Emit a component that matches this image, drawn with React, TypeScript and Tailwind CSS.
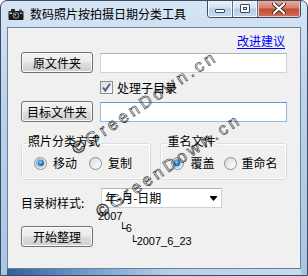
import React from "react";

const btn =
  "h-[21px] w-[72px] shrink-0 rounded-[3px] border border-[#707070] bg-[linear-gradient(#f2f2f2_0%,#ebebeb_48%,#dddddd_52%,#cfcfcf_100%)] shadow-[inset_0_0_0_1px_#fbfbfb] flex items-center justify-center text-[12px] leading-[14px] text-black";

function Radio({ checked }: { checked?: boolean }) {
  return (
    <span className="flex h-[13px] w-[13px] shrink-0 items-center justify-center rounded-full border border-[#8e8f8f] bg-[linear-gradient(135deg,#d8d8d8,#fdfdfd)]">
      {checked ? (
        <span className="flex h-[9px] w-[9px] items-center justify-center rounded-full bg-[linear-gradient(135deg,#6fa3cf,#d5e9f7)]">
          <span className="h-[6px] w-[6px] rounded-full bg-[radial-gradient(circle_at_40%_35%,#9fd3f7_0%,#2a7fc4_45%,#0b3f78_100%)]" />
        </span>
      ) : (
        <span className="h-[9px] w-[9px] rounded-full bg-[linear-gradient(135deg,#dcdcdc,#ffffff)]" />
      )}
    </span>
  );
}

function Watermark({ cls }: { cls: string }) {
  return (
    <span
      className={
        "pointer-events-none absolute origin-left rotate-[-34deg] whitespace-nowrap font-['Liberation_Sans',sans-serif] text-[17px] leading-[24px] tracking-[3.5px] text-transparent [-webkit-text-stroke:0.5px_#000] " +
        cls
      }
    >
      ©GreenDown.cn
    </span>
  );
}

export default function App() {
  return (
    <div className="relative h-[276px] w-[308px] overflow-hidden rounded-t-[7px] border border-[#3c4c60] bg-[linear-gradient(180deg,#d6e5f5_0%,#bcd3ec_35%,#a9c5e5_100%)] px-[6px] font-['Noto_Sans_CJK_SC','Liberation_Sans',sans-serif] text-black">
      {/* title bar */}
      <div className="flex h-[26px] items-start">
        <svg className="ml-[1px] mt-[7px] shrink-0" width="16" height="13" viewBox="0 0 16 13">
          <rect x="0.5" y="3" width="15" height="9" rx="1" fill="#1a1a1a" />
          <rect x="3" y="1" width="4" height="3" fill="#2a2a2a" />
          <rect x="11" y="1.5" width="3" height="2" fill="#555" />
          <circle cx="8" cy="7.5" r="3.3" fill="#8a8a8a" />
          <circle cx="8" cy="7.5" r="2.2" fill="#222" />
          <circle cx="7.3" cy="6.8" r="0.8" fill="#ddd" />
          <rect x="1.5" y="4.5" width="2.5" height="1.5" fill="#cfcfcf" />
          <rect x="12" y="4.5" width="2.5" height="1.5" fill="#9a9a9a" />
        </svg>
        <span className="ml-[6px] mt-[6px] text-[12px] leading-[14px]">数码照片按拍摄日期分类工具</span>
        <div className="flex-1" />
        <div className="-mt-px flex h-[18px] overflow-hidden rounded-b-[4px] border border-t-0 border-[#3c4c60]">
          <div className="flex w-[25px] items-center justify-center border-r border-[#5a6f88] bg-[linear-gradient(180deg,#eef4fb_0%,#d4e2f2_45%,#b5cbe6_55%,#c9dcf0_100%)] shadow-[inset_0_0_0_1px_#f3f8fd]">
            <span className="mt-[5px] h-[4px] w-[10px] rounded-[1px] border border-[#3a4b60] bg-white" />
          </div>
          <div className="flex w-[25px] items-center justify-center border-r border-[#5a6f88] bg-[linear-gradient(180deg,#eef4fb_0%,#d4e2f2_45%,#b5cbe6_55%,#c9dcf0_100%)] shadow-[inset_0_0_0_1px_#f3f8fd]">
            <span className="h-[9px] w-[10px] rounded-[1px] border border-[#3a4b60] bg-white p-[2px]">
              <span className="block h-full w-full border border-[#3a4b60] bg-[#dde7f3]" />
            </span>
          </div>
          <div className="flex w-[42px] items-center justify-center bg-[linear-gradient(180deg,#e8b2a6_0%,#d7806f_45%,#c24b35_55%,#d2725c_100%)] shadow-[inset_0_0_0_1px_#eec3b8]">
            <svg width="14" height="11" viewBox="0 0 14 11">
              <path d="M2 1 L12 10 M12 1 L2 10" stroke="#3a2a28" strokeWidth="4" strokeLinecap="round" />
              <path d="M2 1 L12 10 M12 1 L2 10" stroke="#ffffff" strokeWidth="2.2" strokeLinecap="round" />
            </svg>
          </div>
        </div>
      </div>

      {/* client area */}
      <div className="flex h-[242px] flex-col border border-[#6d8098] bg-[#f0f0f0] px-[13px] text-[12px] leading-[14px]">
        <div className="mt-[6px] flex h-[14px] justify-end">
          <span className="mr-[2px] text-[#0000ff] underline underline-offset-[2px]">改进建议</span>
        </div>

        <div className="mt-[4px] flex items-start">
          <div className={btn}>原文件夹</div>
          <div className="ml-[7px] mt-[1px] h-[20px] flex-1 border border-[#c7d3e0] border-t-[#abb5c2] bg-white" />
        </div>

        <div className="mt-[8px] flex h-[13px] items-center pl-[79px]">
          <span className="flex h-[13px] w-[13px] shrink-0 items-center justify-center border border-[#8e8f8f] bg-[linear-gradient(135deg,#dcdcdc,#fbfbfb)]">
            <svg width="11" height="11" viewBox="0 0 11 11">
              <path d="M2 5.5 L4.3 8.5 L9 1.8" stroke="#4a5f97" strokeWidth="2" fill="none" />
            </svg>
          </span>
          <span className="ml-[4px]">处理子目录</span>
        </div>

        <div className="mt-[7px] flex items-start">
          <div className={btn}>目标文件夹</div>
          <div className="ml-[7px] mt-[1px] h-[20px] flex-1 border border-[#8bbbe8] border-t-[#5a9bd8] bg-white" />
        </div>

        <div className="mt-[21px] flex gap-[9px]">
          <div className="relative flex h-[37px] flex-1 items-center rounded-[3px] border border-[#d5dfe5] pl-[12px] pt-[3px] shadow-[inset_0_0_0_1px_#ffffff]">
            <span className="absolute -top-[10px] left-[5px] bg-[#f0f0f0] px-[1px]">照片分类方式</span>
            <Radio checked />
            <span className="ml-[6px]">移动</span>
            <span className="ml-[12px]">
              <Radio />
            </span>
            <span className="ml-[6px]">复制</span>
          </div>
          <div className="relative flex h-[37px] flex-1 items-center rounded-[3px] border border-[#d5dfe5] pl-[10px] pt-[3px] shadow-[inset_0_0_0_1px_#ffffff]">
            <span className="absolute -top-[10px] left-[6px] bg-[#f0f0f0] px-[1px]">重名文件</span>
            <Radio checked />
            <span className="ml-[7px]">覆盖</span>
            <span className="ml-[9px]">
              <Radio />
            </span>
            <span className="ml-[5px]">重命名</span>
          </div>
        </div>

        <div className="mt-[8px] flex items-start">
          <span className="mt-[8px] w-[80px] shrink-0">目录树样式:</span>
          <div className="flex h-[20px] w-[121px] items-center border border-[#c7d3e0] border-t-[#abb5c2] bg-white pl-[3px] pr-[4px]">
            <span className="flex-1 leading-[14px]">年-月-日期</span>
            <svg width="7" height="5" viewBox="0 0 7 5">
              <path d="M0 0 H7 V1 L3.5 5 L0 1 Z" fill="#000" />
            </svg>
          </div>
        </div>

        <div className="flex items-start">
          <div className={btn + " mt-[16px]"}>开始整理</div>
          <div className="ml-[5px] flex flex-col font-['Liberation_Sans','DejaVu_Sans',sans-serif] text-[11px] leading-[12px]">
            <span>2007</span>
            <span className="pl-[21px]">
              <span className="font-['DejaVu_Sans',sans-serif]">└</span>6
            </span>
            <span className="pl-[32px]">
              <span className="font-['DejaVu_Sans',sans-serif]">└</span>2007_6_23
            </span>
          </div>
        </div>
      </div>

      {/* bottom frame */}
      <div className="h-[6px] bg-[linear-gradient(90deg,#2f5f9a_0%,#6b98c9_25%,#b7cfea_55%,#c6dbf0_100%)]" />

      <Watermark cls="left-[73px] top-[138px]" />
      <Watermark cls="left-[97px] top-[201px]" />
    </div>
  );
}
